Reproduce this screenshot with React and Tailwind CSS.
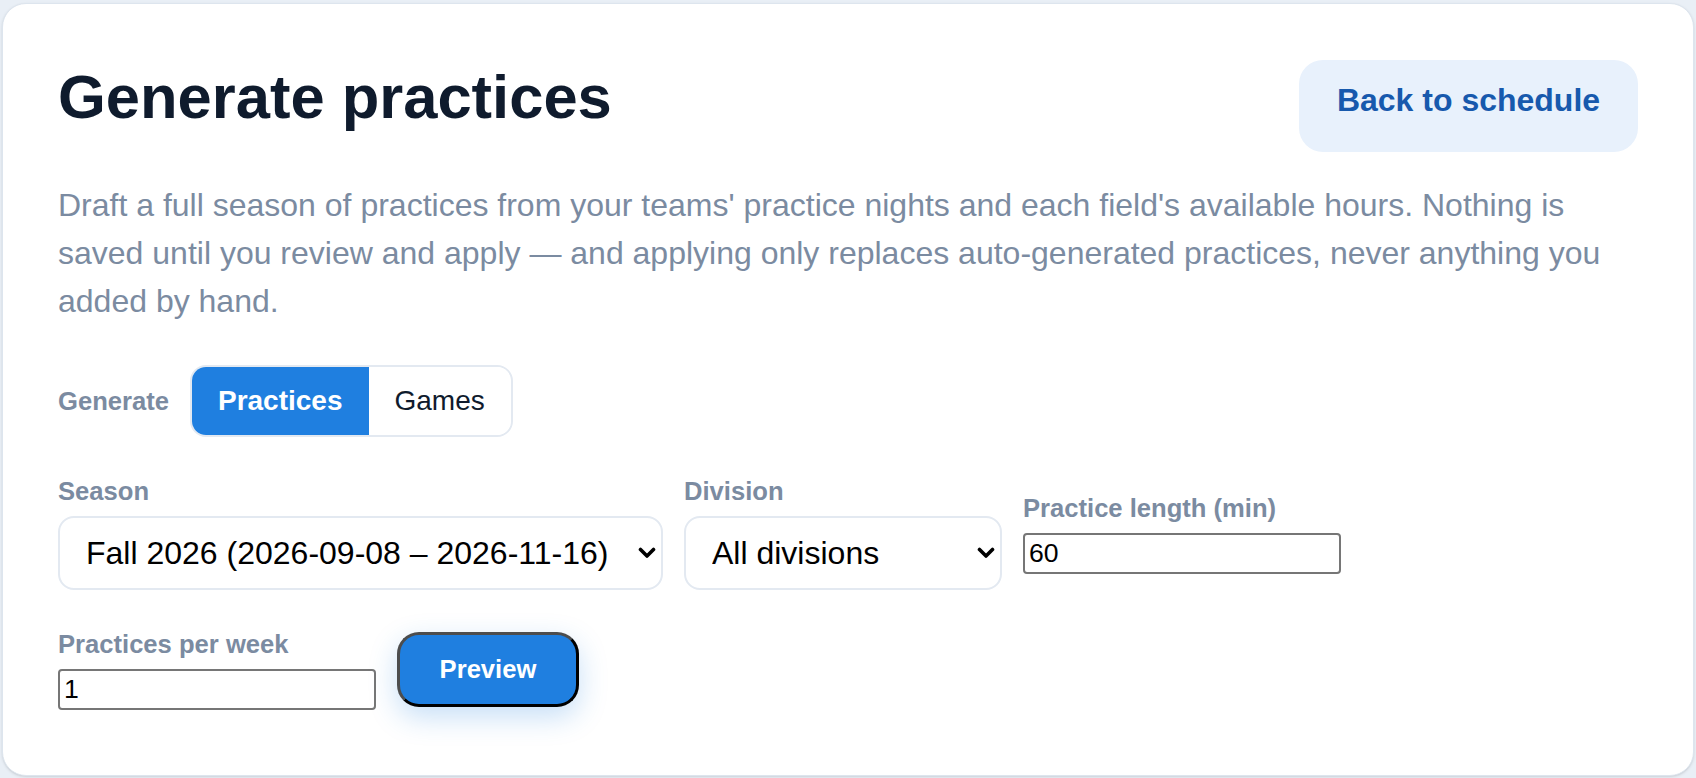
import React from 'react';

const font = { fontFamily: '"Liberation Sans", Arial, sans-serif' };

const Field = ({ label, children }) => (
  <div className="flex flex-col gap-[10px]">
    <label className="text-[25.6px] leading-[30px] font-bold text-[#7b8ba1]">{label}</label>
    {children}
  </div>
);

const Chevron = () => (
  <svg
    className="pointer-events-none absolute right-[7px] top-1/2 -translate-y-1/2"
    width="18"
    height="12"
    viewBox="0 0 18 12"
    fill="none"
  >
    <path d="M2.5 2.5 L9 9 L15.5 2.5" stroke="black" strokeWidth="3.6" strokeLinecap="round" strokeLinejoin="round" />
  </svg>
);

const Select = ({ width, children }) => (
  <div className="relative" style={{ width }}>
    <select className="h-[74px] w-full appearance-none rounded-[16px] border-2 border-[#e3e9f1] bg-white pl-[26px] pr-[36px] text-[32px] text-black">
      {children}
    </select>
    <Chevron />
  </div>
);

export default function App() {
  return (
    <div style={font} className="min-h-screen bg-[#e9eff6] px-[2px] pt-[3px] pb-[4px]">
      <div className="bg-white border border-[#dde5ee] rounded-[24px] px-[55px] pt-[56px] pb-[65px] shadow-sm">
        {/* header */}
        <div className="flex items-start justify-between">
          <h1 className="text-[61.5px] leading-[1.2] font-bold text-[#0f1b2d]">Generate practices</h1>
          <a className="block h-[92px] w-[339px] rounded-[24px] bg-[#e8f1fc] pt-[22px] text-center text-[32px] leading-[37px] font-bold text-[#1759ad]">
            Back to schedule
          </a>
        </div>

        <p className="mt-[29px] max-w-[1560px] text-[32px] leading-[48px] text-[#7b8ba1]">
          Draft a full season of practices from your teams' practice nights and each field's available hours. Nothing is saved until you review and apply — and applying only replaces auto-generated practices, never anything you added by hand.
        </p>

        {/* mode toggle */}
        <div className="mt-[40px] flex items-center gap-[21px]">
          <span className="text-[25.6px] font-bold text-[#7b8ba1]">Generate</span>
          <div className="flex h-[72px] overflow-hidden rounded-[16px] border-2 border-[#e3e9f1]">
            <button className="px-[26px] bg-[#1f7fe0] text-[28px] font-bold text-white">Practices</button>
            <button className="px-[26px] bg-white text-[28px] text-[#0f1b2d]">Games</button>
          </div>
        </div>

        {/* fields */}
        <div className="mt-[39px] flex flex-wrap items-center gap-x-[21px] gap-y-[39px]">
          <Field label="Season">
            <Select width={605}>
              <option>Fall 2026 (2026-09-08 – 2026-11-16)</option>
            </Select>
          </Field>
          <Field label="Division">
            <Select width={318}>
              <option>All divisions</option>
            </Select>
          </Field>
          <Field label="Practice length (min)">
            <input
              type="number"
              defaultValue="60"
              className="h-[41px] w-[318px] rounded-[4px] border-2 border-[#767676] bg-white px-[4px] text-[26.6px] text-black"
            />
          </Field>
          <Field label="Practices per week">
            <input
              type="number"
              defaultValue="1"
              className="h-[41px] w-[318px] rounded-[4px] border-2 border-[#767676] bg-white px-[4px] text-[26.6px] text-black"
            />
          </Field>
          <button className="h-[75px] w-[182px] rounded-[22px] border-[3px] border-t-[#4d4d4d] border-l-[#4d4d4d] border-b-black border-r-black bg-[#1f7fe0] text-[25.6px] font-bold text-white shadow-[0_10px_28px_rgba(31,127,224,0.25)]">
            Preview
          </button>
        </div>
      </div>
    </div>
  );
}
